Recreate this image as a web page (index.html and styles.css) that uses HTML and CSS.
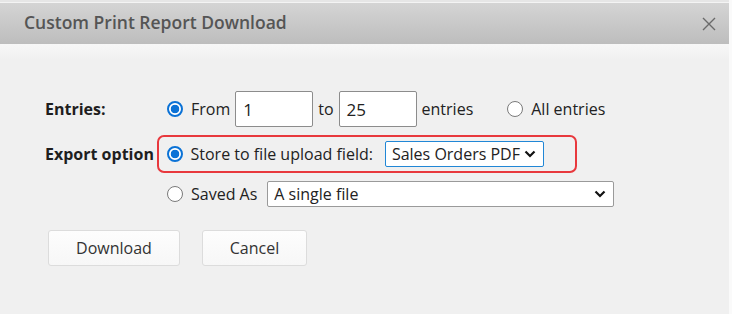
FILE: index.html
```html
<!DOCTYPE html>
<html>
<head>
<meta charset="utf-8">
<link rel="stylesheet" href="styles.css">
</head>
<body>
<div class="dialog">
  <div class="header">
    <div class="title">Custom Print Report Download</div>
    <svg class="close" width="16" height="16" viewBox="0 0 16 16"><path d="M2 2L14 14M14 2L2 14" stroke="#6a6a6a" stroke-width="1.4" fill="none"/></svg>
  </div>
  <div class="content">
    <div class="row">
      <div class="label">Entries:</div>
      <div class="controls">
        <span class="radio checked"></span>
        <span class="txt">From</span>
        <span class="input">1</span>
        <span class="txt">to</span>
        <span class="input">25</span>
        <span class="txt">entries</span>
        <span class="radio all"></span>
        <span class="txt">All entries</span>
      </div>
    </div>
    <div class="row row2">
      <div class="label">Export option</div>
      <div class="controls highlight">
        <span class="radio checked"></span>
        <span class="txt">Store to file upload field:</span>
        <span class="select focus">Sales Orders PDF<svg class="chev" width="12" height="8" viewBox="0 0 12 8"><path d="M1.5 1.5L6 6L10.5 1.5" stroke="#111" stroke-width="2.2" fill="none"/></svg></span>
      </div>
    </div>
    <div class="row row3">
      <div class="label"></div>
      <div class="controls">
        <span class="radio"></span>
        <span class="txt">Saved As</span>
        <span class="select wide">A single file<svg class="chev" width="12" height="8" viewBox="0 0 12 8"><path d="M1.5 1.5L6 6L10.5 1.5" stroke="#111" stroke-width="2.2" fill="none"/></svg></span>
      </div>
    </div>
    <div class="buttons">
      <button class="btn download">Download</button>
      <button class="btn cancel">Cancel</button>
    </div>
  </div>
</div>
</body>
</html>
```
FILE: styles.css
```css
html, body {
  margin: 0;
  padding: 0;
  background: #f0f0f0;
  font-family: "Open Sans", "Noto Sans", sans-serif;
  color: #222;
}
.dialog {
  width: 732px;
  height: 314px;
  box-sizing: border-box;
  border-right: 3px solid #fafafa;
  background: #f0f0f0;
}
.header {
  height: 42px;
  border-top: 2px solid #e6e6e6;
  box-shadow: inset 0 1px 0 #f4f4f4;
  background: linear-gradient(#d5d5d5, #bdbdbd);
  display: flex;
  align-items: center;
  justify-content: space-between;
  padding: 0 12px 0 24px;
}
.title {
  font-size: 17.5px;
  font-weight: 600;
  color: #555;
  margin-top: -2px;
}
.close {
  margin-top: 2px;
}
.content {
  background: linear-gradient(#f7f7f7, #f0f0f0 16px);
  padding: 47px 0 0 45px;
}
.row {
  display: flex;
  align-items: center;
}
.row2 {
  margin-top: 8px;
}
.row3 {
  margin-top: 8px;
}
.label {
  width: 112px;
  font-weight: 700;
  font-size: 16px;
  color: #1e1e1e;
}
.controls {
  display: flex;
  align-items: center;
  padding-left: 10px;
  font-size: 16px;
}
.highlight {
  border: 2.5px solid #e8383d;
  border-radius: 7px;
  height: 34px;
  padding-left: 7.5px;
  padding-right: 31px;
}
.radio {
  width: 16px;
  height: 16px;
  box-sizing: border-box;
  border-radius: 50%;
  border: 1px solid #7a7a7a;
  background: #fff;
  margin-right: 8px;
  flex: none;
}
.radio.checked {
  border: 2px solid #0b72d6;
  background: radial-gradient(circle, #0b72d6 0 4px, #fff 4.6px);
}
.radio.all {
  margin-left: 34px;
}
.txt {
  white-space: nowrap;
  color: #222;
}
.input {
  width: 78px;
  height: 36px;
  box-sizing: border-box;
  border: 1px solid #8c8c8c;
  border-radius: 2px;
  background: #fff;
  margin: 0 5px;
  padding-left: 7px;
  display: flex;
  align-items: center;
  font-size: 17px;
}
.select {
  height: 26px;
  box-sizing: border-box;
  border: 1px solid #9a9a9a;
  border-radius: 2px;
  background: #fff;
  display: flex;
  align-items: center;
  justify-content: space-between;
  padding: 0 7px 0 6px;
  font-size: 16px;
}
.select.focus {
  margin-left: 12px;
  width: 159px;
  border-color: #2187d6;
}
.select.wide {
  margin-left: 10px;
  width: 347px;
}
.chev {
  flex: none;
}
.buttons {
  display: flex;
  gap: 22px;
  margin-top: 23px;
  padding-left: 3px;
}
.btn {
  height: 36px;
  box-sizing: border-box;
  border: 1px solid #dcdcdc;
  border-radius: 3px;
  background: linear-gradient(#fdfdfd, #f7f7f7);
  font-family: "Open Sans", "Noto Sans", sans-serif;
  font-size: 16px;
  color: #333;
  padding: 0;
}
.download { width: 132px; }
.cancel { width: 105px; }
```
